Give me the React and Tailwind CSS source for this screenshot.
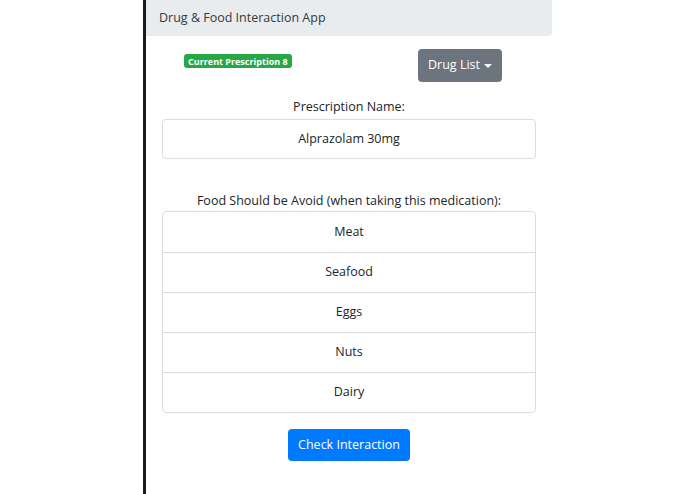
export default function App() {
  const foods = ["Meat", "Seafood", "Eggs", "Nuts", "Dairy"];
  const font = { fontFamily: '"Open Sans", "Noto Sans", sans-serif' };
  return (
    <div className="flex h-[494px] w-[695px] bg-white text-[#212529]" style={font}>
      <div className="w-[143px] shrink-0" />
      <div className="w-[3px] shrink-0 bg-[#1a1a1a]" />
      <div className="flex w-[406px] shrink-0 flex-col">
        <div className="flex h-[36px] items-center rounded-br-[4px] bg-[#e9ecef] pl-[13px] text-[12.5px] text-[#343a40]">
          Drug &amp; Food Interaction App
        </div>
        <div className="flex items-start pt-[13px]">
          <span className="ml-[38px] mt-[5px] flex h-[14px] items-center rounded-[3px] bg-[#28a745] px-[4px] text-[9px] font-bold leading-none text-white">
            Current Prescription 8
          </span>
          <button className="ml-auto mr-[50px] flex h-[33px] w-[84px] items-center justify-center gap-[4px] rounded-[4px] bg-[#6c757d] text-[12.5px] text-white">
            Drug List
            <span className="mt-[1px] h-0 w-0 border-x-[4px] border-t-[4px] border-x-transparent border-t-white" />
          </button>
        </div>
        <div className="px-[16px]">
          <div className="mt-[16px] text-center text-[12.5px] leading-[18px]">Prescription Name:</div>
          <div className="mt-[3px] flex h-[40px] items-center justify-center rounded-[4px] border border-[#dcdcdc] text-[12.5px]">
            Alprazolam 30mg
          </div>
          <div className="mt-[33px] text-center text-[12.5px] leading-[18px]">
            Food Should be Avoid (when taking this medication):
          </div>
          <div className="mt-[1px] flex flex-col rounded-[4px] border border-[#dcdcdc]">
            {foods.map((f, i) => (
              <div
                key={f}
                className={`flex h-[40px] items-center justify-center text-[12.5px] ${i > 0 ? "border-t border-[#dcdcdc]" : ""}`}
              >
                {f}
              </div>
            ))}
          </div>
          <div className="mt-[16px] flex justify-center">
            <button className="flex h-[32px] w-[122px] items-center justify-center rounded-[4px] bg-[#007bff] text-[12.5px] text-white">
              Check Interaction
            </button>
          </div>
        </div>
      </div>
    </div>
  );
}
